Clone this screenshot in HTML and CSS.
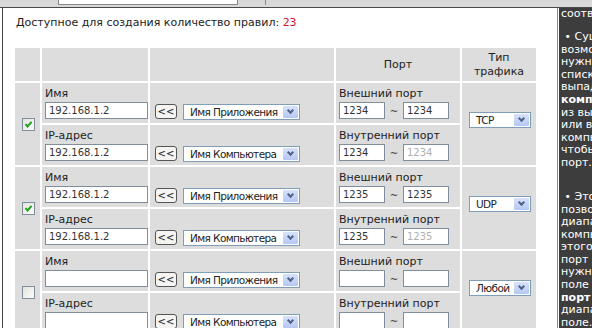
FILE: index.html
```html
<!DOCTYPE html>
<html lang="ru">
<head>
<meta charset="utf-8">
<link rel="stylesheet" href="styles.css">
</head>
<body>
<div class="topbar">
  <div class="tb-gap1"></div>
  <div class="tb-box"></div>
  <div class="tb-gap2"></div>
  <div class="tb-mark"></div>
</div>
<div class="page">
  <div class="main">
    <p class="avail">Доступное для создания количество правил: <span class="num">23</span></p>
    <table class="rules">
      <colgroup>
        <col class="w1"><col class="w2"><col class="w3"><col class="w4"><col class="w5">
      </colgroup>
      <tr class="head">
        <th></th><th></th><th></th><th>Порт</th><th>Тип<br>трафика</th>
      </tr>
      <tr>
        <td class="c1" rowspan="2"><span class="cb"><svg viewBox="0 0 13 13" width="13" height="13"><path d="M3.5 6.2 L5.5 8.4 L9.6 3.8" fill="none" stroke="#21a121" stroke-width="2"/></svg></span></td>
        <td class="c2"><div class="lbl">Имя</div><div class="inp">192.168.1.2</div></td>
        <td class="c3"><span class="btn">&lt;&lt;</span><span class="sel sel-app">Имя Приложения<span class="arr"></span></span></td>
        <td class="c4"><div class="lbl">Внешний порт</div><div class="range"><span class="inp pin">1234</span><span class="tl">~</span><span class="inp pin">1234</span></div></td>
        <td class="c5" rowspan="2"><span class="sel sel-type">TCP<span class="arr"></span></span></td>
      </tr>
      <tr>
        <td class="c2"><div class="lbl">IP-адрес</div><div class="inp">192.168.1.2</div></td>
        <td class="c3"><span class="btn">&lt;&lt;</span><span class="sel sel-app">Имя Компьютера<span class="arr"></span></span></td>
        <td class="c4"><div class="lbl">Внутренний порт</div><div class="range"><span class="inp pin">1234</span><span class="tl">~</span><span class="inp pin off">1234</span></div></td>
      </tr>
      <tr>
        <td class="c1" rowspan="2"><span class="cb"><svg viewBox="0 0 13 13" width="13" height="13"><path d="M3.5 6.2 L5.5 8.4 L9.6 3.8" fill="none" stroke="#21a121" stroke-width="2"/></svg></span></td>
        <td class="c2"><div class="lbl">Имя</div><div class="inp">192.168.1.2</div></td>
        <td class="c3"><span class="btn">&lt;&lt;</span><span class="sel sel-app">Имя Приложения<span class="arr"></span></span></td>
        <td class="c4"><div class="lbl">Внешний порт</div><div class="range"><span class="inp pin">1235</span><span class="tl">~</span><span class="inp pin">1235</span></div></td>
        <td class="c5" rowspan="2"><span class="sel sel-type">UDP<span class="arr"></span></span></td>
      </tr>
      <tr>
        <td class="c2"><div class="lbl">IP-адрес</div><div class="inp">192.168.1.2</div></td>
        <td class="c3"><span class="btn">&lt;&lt;</span><span class="sel sel-app">Имя Компьютера<span class="arr"></span></span></td>
        <td class="c4"><div class="lbl">Внутренний порт</div><div class="range"><span class="inp pin">1235</span><span class="tl">~</span><span class="inp pin off">1235</span></div></td>
      </tr>
      <tr>
        <td class="c1" rowspan="2"><span class="cb"></span></td>
        <td class="c2"><div class="lbl">Имя</div><div class="inp"></div></td>
        <td class="c3"><span class="btn">&lt;&lt;</span><span class="sel sel-app">Имя Приложения<span class="arr"></span></span></td>
        <td class="c4"><div class="lbl">Внешний порт</div><div class="range"><span class="inp pin"></span><span class="tl">~</span><span class="inp pin"></span></div></td>
        <td class="c5" rowspan="2"><span class="sel sel-type">Любой<span class="arr"></span></span></td>
      </tr>
      <tr>
        <td class="c2"><div class="lbl">IP-адрес</div><div class="inp"></div></td>
        <td class="c3"><span class="btn">&lt;&lt;</span><span class="sel sel-app">Имя Компьютера<span class="arr"></span></span></td>
        <td class="c4"><div class="lbl">Внутренний порт</div><div class="range"><span class="inp pin"></span><span class="tl">~</span><span class="inp pin"></span></div></td>
      </tr>
    </table>
  </div>
  <div class="side">
    <p class="sp sp1">соответствующий порт.</p>
    <p class="sp sp2">&nbsp;• Существует<br>возможность выбрать<br>нужный компьютер из<br>списка DHCP-клиентов<br>выпадающего меню<br><b>компьютера</b> или<br>из выпадающего меню<br>или ввести IP-адрес<br>компьютера вручную,<br>чтобы открыть для него<br>порт.</p>
    <p class="sp">&nbsp;• Этот параметр<br>позволяет открыть<br>диапазон портов<br>компьютера. Для<br>этого введите первый<br>порт диапазона в<br>нужное поле, а в<br>поле<br><b>порт</b> последний<br>диапазона в<br>поле...</p>
  </div>
</div>
</body>
</html>
```

FILE: styles.css
```css
* { box-sizing: border-box; }
html, body { margin: 0; padding: 0; background: #fff; }
body {
  width: 592px;
  height: 328px;
  overflow: hidden;
  font-family: "DejaVu Sans", Verdana, sans-serif;
  font-size: 11px;
  color: #222;
}

.topbar {
  height: 8px;
  background: #d9d9d9;
  border-bottom: 1px solid #4a4a4a;
  display: flex;
}
.tb-gap1 { width: 58px; }
.tb-box {
  width: 180px;
  height: 5px;
  background: #fff;
  border: 1px solid #888;
  border-top: 0;
}
.tb-gap2 { width: 27px; }
.tb-mark { width: 1px; height: 5px; background: #888; }

.page { display: flex; height: 320px; }

.main {
  flex: 1;
  margin-left: 2px;
  border-left: 1px solid #444;
  padding: 8px 0 0 10px;
  background: #fff;
}

.avail {
  margin: 0 0 16px 3px;
  font-size: 11px;
  line-height: 14px;
  color: #222;
}
.num { color: #d6112c; }

.rules {
  border-collapse: separate;
  border-spacing: 2px;
  table-layout: fixed;
  width: 525px;
}
.w1 { width: 25px; }
.w2 { width: 106px; }
.w3 { width: 184px; }
.w4 { width: 124px; }
.w5 { width: 74px; }

.rules th, .rules td {
  background: #dddddd;
  padding: 0;
  vertical-align: top;
  font-weight: normal;
}
.rules th {
  height: 33px;
  vertical-align: middle;
  text-align: center;
  line-height: 14px;
  color: #222;
}
.rules td { height: 40px; }

.c1 { padding-left: 7px !important; padding-top: 35px !important; }
.c2, .c4 { padding-left: 3px !important; }
.c3 { padding-left: 5px !important; padding-top: 21px !important; white-space: nowrap; }
.c5 { padding-left: 7px !important; padding-top: 29px !important; }

.lbl {
  line-height: 14px;
  padding-top: 4px;
  height: 19px;
  color: #222;
  white-space: nowrap;
}

.inp {
  display: block;
  height: 17px;
  width: 103px;
  background: #fff;
  border: 1px solid #7f8d9c;
  font-size: 10px;
  line-height: 15px;
  padding-left: 3px;
  color: #333;
  white-space: nowrap;
}
.range { display: flex; align-items: center; }
.pin { width: 46px; }
.tl { width: 18px; text-align: center; font-size: 10px; color: #444; padding-top: 2px; }
.off { color: #b0b0b0; }

.cb {
  display: block;
  width: 13px;
  height: 13px;
  border: 1px solid #7f8d9c;
  background: linear-gradient(135deg, #e4e4de, #fbfbf8);
  position: relative;
}
.cb svg { position: absolute; left: -1px; top: -1px; }

.btn {
  display: inline-block;
  vertical-align: top;
  width: 22px;
  height: 15px;
  border: 1px solid #555;
  border-radius: 3px;
  background: #f4f4f2;
  font-size: 10px;
  line-height: 13px;
  text-align: center;
  color: #222;
  margin-right: 6px;
}

.sel {
  display: inline-block;
  vertical-align: top;
  position: relative;
  height: 16px;
  background: #fff;
  border: 1px solid #7f9db9;
  font-size: 10.5px;
  letter-spacing: -0.6px;
  line-height: 14px;
  padding-left: 6px;
  color: #222;
  white-space: nowrap;
}
.sel-app { width: 117px; }
.sel-type { width: 62px; }
.arr {
  position: absolute;
  right: 1px;
  top: 1px;
  width: 15px;
  height: 12px;
  background: linear-gradient(#d7e2fb, #b5c8f3);
  border-radius: 1px;
}
.arr::after {
  content: "";
  position: absolute;
  left: 5px;
  top: 2px;
  width: 3px;
  height: 3px;
  border-right: 2px solid #4d6185;
  border-bottom: 2px solid #4d6185;
  transform: rotate(45deg);
}

.side {
  width: 35px;
  background: #3d3d3d;
  border-left: 1px solid #8a8a8a;
  box-shadow: inset 1px 0 0 #fff;
  padding: 0 0 0 3px;
  color: #fff;
  overflow: hidden;
  font-size: 11px;
  line-height: 12.6px;
  white-space: nowrap;
}
.sp { margin: 0; }
.sp1 { margin-bottom: 10.4px; }
.sp2 { margin-bottom: 21.4px; }
.sp b { font-weight: bold; }
```
